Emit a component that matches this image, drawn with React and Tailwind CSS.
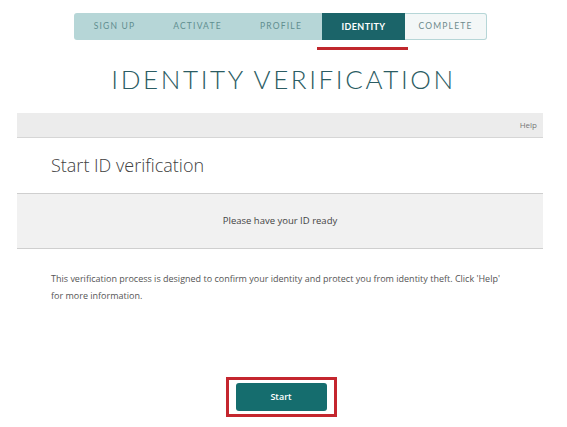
export default function App() {
  const tabs = [
    { label: "SIGN UP", w: "w-[81px]" },
    { label: "ACTIVATE", w: "w-[85px]" },
    { label: "PROFILE", w: "w-[82px]" },
  ];
  return (
    <div className="w-[567px] h-[427px] bg-white overflow-hidden" style={{ fontFamily: "'Open Sans', 'Noto Sans', sans-serif" }}>
      <div className="pt-[13px] pl-[74px]">
        <div className="flex h-[27px] w-[413px]" style={{ fontFamily: "Lato, sans-serif" }}>
          <div className="flex bg-[#b6d6d7] rounded-l-[3px]">
            {tabs.map((t) => (
              <div key={t.label} className={`${t.w} flex items-center justify-center text-[8.5px] tracking-[0.14em] text-[#5f8e90]`}>
                {t.label}
              </div>
            ))}
          </div>
          <div className="relative w-[83px] bg-[#1b6469] flex items-center justify-center text-[9px] font-bold tracking-[0.04em] text-white">
            IDENTITY
            <div className="absolute left-[-5px] right-[-3px] top-[34px] h-[3px] bg-[#c0272d]"></div>
          </div>
          <div className="w-[82px] bg-[#f3f7f7] border border-l-0 border-[#b6d6d7] rounded-r-[3px] flex items-center justify-center text-[8.5px] tracking-[0.14em] text-[#6d8a8c]">
            COMPLETE
          </div>
        </div>
      </div>
      <div className="mt-[23px] flex justify-center">
        <div className="text-[26px] leading-[32px] font-light tracking-[0.1em] text-[#2b5c63]" style={{ fontFamily: "Lato, sans-serif" }}>
          IDENTITY VERIFICATION
        </div>
      </div>
      <div className="mx-[17px] mt-[18px] w-[526px]">
        <div className="h-[25px] bg-[#ececec] border-b border-[#d6d6d6] flex items-center justify-end pr-[6px] text-[8px] text-[#777]">
          Help
        </div>
        <div className="h-[56px] flex items-center pl-[34px] text-[18px] font-light text-[#404040] border-b border-[#cfcfcf]">
          Start ID verification
        </div>
        <div className="h-[55px] bg-[#f1f1f1] border-b border-[#cfcfcf] flex items-center justify-center text-[9.5px] text-[#444]">
          Please have your ID ready
        </div>
        <div className="pt-[21px] pl-[34px] pr-[20px] text-[9px] leading-[17px] text-[#555]">
          This verification process is designed to confirm your identity and protect you from identity theft. Click 'Help'<br />for more information.
        </div>
      </div>
      <div className="mt-[73px] flex justify-center pr-[5px]">
        <div className="border-[3px] border-[#c4262e] px-[7px] py-[3px]">
          <div className="w-[91px] h-[28px] rounded-[3px] bg-[#156d6e] flex items-center justify-center text-[9px] font-semibold text-white">
            Start
          </div>
        </div>
      </div>
    </div>
  );
}
